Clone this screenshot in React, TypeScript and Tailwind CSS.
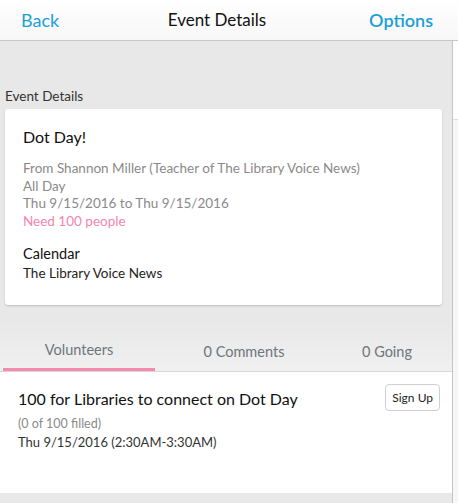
export default function App() {
  return (
    <div className="w-[458px] h-[503px] overflow-hidden flex flex-col bg-white text-[#222]" style={{ fontFamily: "Lato, 'Open Sans', sans-serif" }}>
      {/* header */}
      <div className="h-[41px] shrink-0 flex items-center justify-between px-[21px] bg-gradient-to-b from-white to-[#f7f7f7] border-b border-[#c8c8c8] relative">
        <span className="text-[18px] text-[#1aa0d8]">Back</span>
        <span className="absolute left-0 right-[24px] text-center text-[17px] text-[#111]">Event Details</span>
        <span className="text-[18px] font-semibold text-[#1aa0d8] pr-[4px]">Options</span>
      </div>

      <div className="flex flex-1 min-h-0">
        <div className="w-[452px] flex flex-col bg-[#e8e8e8]">
          <div className="h-[46px]" />
          <div className="px-[5px] text-[13.5px] text-[#333] leading-[18px]">Event Details</div>

          {/* card */}
          <div className="mx-[5px] mt-[4px] w-[437px] h-[196px] bg-white rounded-[3px] shadow-[0_1px_2px_rgba(0,0,0,0.18)] px-[18px] pt-[17px]">
            <div className="text-[16px] text-[#111] leading-[22px]">Dot Day!</div>
            <div className="mt-[12px] text-[13.5px] text-[#8a8a8a] leading-[17.7px]">
              <div>From Shannon Miller (Teacher of The Library Voice News)</div>
              <div>All Day</div>
              <div>Thu 9/15/2016 to Thu 9/15/2016</div>
              <div className="text-[#f585ad]">Need 100 people</div>
            </div>
            <div className="mt-[13px] text-[14.5px] text-[#111] leading-[20px]">Calendar</div>
            <div className="text-[13.5px] text-[#222] leading-[18px]">The Library Voice News</div>
          </div>

          {/* tabs */}
          <div className="mt-[15px] h-[52px] bg-gradient-to-b from-[#e8e8e8] to-[#f0f0f0] flex items-end border-b border-[#d8d8d8]">
            <div className="ml-[3px] w-[152px] h-full flex items-center justify-center pt-[12px] text-[14.5px] text-[#6e767a] border-b-[3px] border-[#f589b0]">Volunteers</div>
            <div className="w-[178px] h-full flex items-center justify-center pt-[12px] text-[14.5px] text-[#6e767a]">0 Comments</div>
            <div className="w-[108px] h-full flex items-center justify-center pt-[12px] text-[14.5px] text-[#6e767a]">0 Going</div>
          </div>

          {/* list item */}
          <div className="h-[121px] bg-white flex justify-between pl-[18px] pr-[12px] pt-[12px]">
            <div>
              <div className="mt-[3px] text-[16px] text-[#111] leading-[24px]">100 for Libraries to connect on Dot Day</div>
              <div className="mt-[4px] text-[12.5px] text-[#8a8a8a] leading-[17px]">(0 of 100 filled)</div>
              <div className="mt-[1px] text-[13px] text-[#333] leading-[18px]">Thu 9/15/2016 (2:30AM-3:30AM)</div>
            </div>
            <div className="h-[27px] px-[6px] border border-[#cfcfcf] rounded-[4px] flex items-center text-[12px] text-[#222] bg-white">Sign Up</div>
          </div>
          <div className="flex-1 bg-[#e8e8e8]" />
        </div>
        <div className="w-[6px] border-l border-[#c4c4c4] bg-[#f6f6f6] flex flex-col">
          <div className="h-[79px] bg-white border-b border-[#e0e0e0]" />
        </div>
      </div>
    </div>
  )
}
